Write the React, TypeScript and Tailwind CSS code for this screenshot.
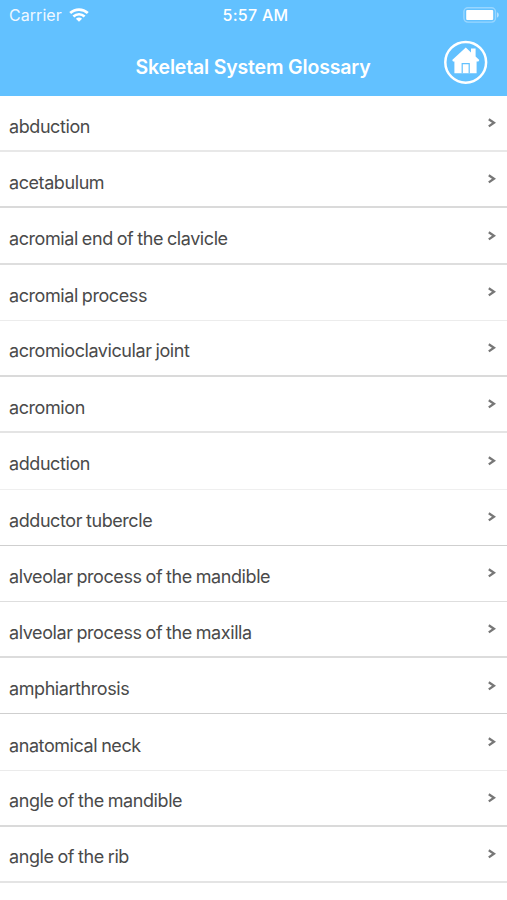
const terms: { name: string; line: string }[] = [
  { name: "abduction", line: "h-[2px] bg-[#e8e8e8]" },
  { name: "acetabulum", line: "h-[2px] bg-[#dadada]" },
  { name: "acromial end of the clavicle", line: "h-[2px] bg-[#dedede]" },
  { name: "acromial process", line: "h-[1px] bg-[#ececec]" },
  { name: "acromioclavicular joint", line: "h-[2px] bg-[#dadada]" },
  { name: "acromion", line: "h-[2px] bg-[#e4e4e4]" },
  { name: "adduction", line: "h-[1px] bg-[#efefef]" },
  { name: "adductor tubercle", line: "h-[1px] bg-[#cfcfcf]" },
  { name: "alveolar process of the mandible", line: "h-[1px] bg-[#dedede]" },
  { name: "alveolar process of the maxilla", line: "h-[2px] bg-[#dcdcdc]" },
  { name: "amphiarthrosis", line: "h-[1px] bg-[#cfcfcf]" },
  { name: "anatomical neck", line: "h-[1px] bg-[#ebebeb]" },
  { name: "angle of the mandible", line: "h-[2px] bg-[#dadada]" },
  { name: "angle of the rib", line: "h-[2px] bg-[#e4e4e4]" },
];

function WifiIcon() {
  return (
    <svg width="20" height="14" viewBox="0 0 20 14" fill="none" stroke="#fff" strokeWidth="2.7">
      <path d="M1.2 5.1C6.2.4 13.8.4 18.8 5.1" />
      <path d="M4.4 8.5C7.6 5.5 12.4 5.5 15.6 8.5" />
      <path d="M10 13.8L6.9 10.8C8.7 9.2 11.3 9.2 13.1 10.8Z" fill="#fff" stroke="none" />
    </svg>
  );
}

function BatteryIcon() {
  return (
    <svg width="37" height="16" viewBox="0 0 37 16" fill="none">
      <rect x="0.9" y="0.7" width="31.6" height="14.4" rx="4" stroke="#fff" strokeOpacity="0.35" strokeWidth="1.4" />
      <rect x="3.2" y="3" width="27" height="10" rx="1" fill="#fff" />
      <path d="M34 5.2C36.4 6.2 36.4 9.6 34 10.6Z" fill="#fff" fillOpacity="0.5" />
    </svg>
  );
}

function HomeIcon() {
  return (
    <svg width="44" height="44" viewBox="0 0 44 44" fill="none">
      <circle cx="21.7" cy="22.3" r="20.4" stroke="#fff" strokeWidth="2.5" />
      <path d="M21.8 7.6L27 12.4V8.6H31.6V16.6L35.3 20L34.4 21.4H32.6V33.2H10.4V21.4H9L8.2 20Z" fill="#fff" />
      <path d="M18.2 33.2V23.6H25.2V33.2" stroke="#62c1ff" strokeWidth="1.2" />
    </svg>
  );
}

export default function App() {
  return (
    <div className="flex h-[900px] w-[507px] flex-col overflow-hidden bg-white font-['Inter','Liberation_Sans',sans-serif]">
      <header className="h-[96px] shrink-0 bg-[#62c1ff] text-white">
        <div className="grid h-[29px] grid-cols-3 items-center pr-[7px] pl-[9px]">
          <div className="flex items-center gap-[7px]">
            <span className="pt-px text-[16px] leading-[28px] tracking-[0.05px] opacity-90">Carrier</span>
            <WifiIcon />
          </div>
          <span className="pt-px pl-[2px] text-center text-[16px] leading-[28px] font-medium tracking-[0.3px]">
            5:57 AM
          </span>
          <div className="flex justify-end">
            <BatteryIcon />
          </div>
        </div>
        <div className="grid h-[66px] grid-cols-[62px_1fr_63px] items-center">
          <h1 className="col-start-2 pt-[12px] text-center text-[19.5px] font-semibold tracking-[-0.17px] whitespace-nowrap">
            Skeletal System Glossary
          </h1>
          <a href="#home" aria-label="Home">
            <HomeIcon />
          </a>
        </div>
      </header>
      <ul>
        {terms.map(({ name, line }) => (
          <li key={name} className="flex h-[56.23px] flex-col">
            <div className="flex flex-1 items-center justify-between pr-[11px] pl-[9px]">
              <span className="pt-[7px] text-[18px] leading-6 tracking-[-0.42px] [word-spacing:-0.7px] text-[#4a4a4a]">
                {name}
              </span>
              <svg width="8" height="10" viewBox="0 0 8 10" fill="none" stroke="#777" strokeWidth="2.3">
                <path d="M0.8 1.2L6 4.8L0.8 8.4" />
              </svg>
            </div>
            <div className={line} />
          </li>
        ))}
      </ul>
    </div>
  );
}
